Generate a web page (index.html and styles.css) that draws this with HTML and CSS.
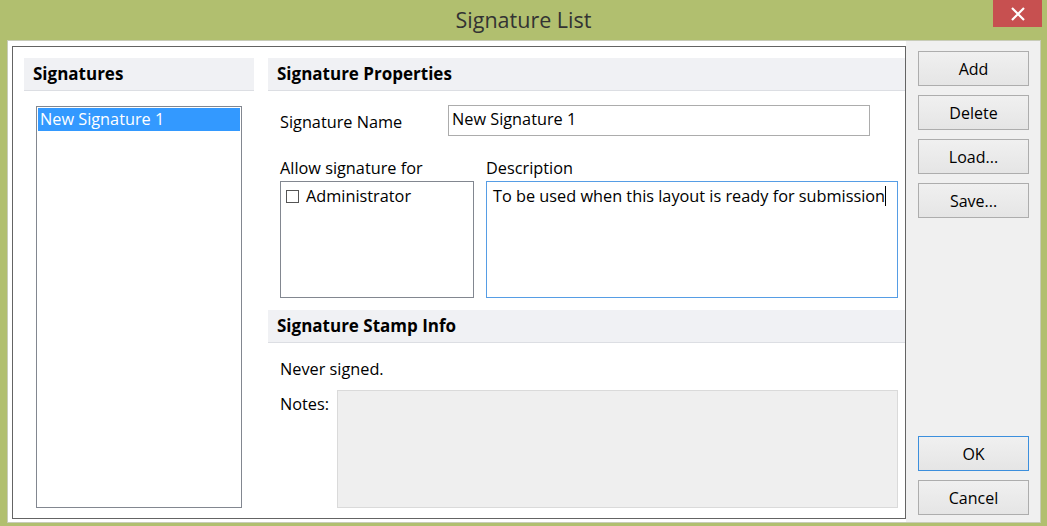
FILE: index.html
```html
<!DOCTYPE html>
<html lang="en">
<head>
  <meta charset="UTF-8">
  <meta name="viewport" content="width=device-width, initial-scale=1.0">
  <title>Signature List</title>
  <link rel="stylesheet" href="styles.css">
</head>
<body>
  <!-- Barre de titre -->
  <div class="titlebar">
    <span></span>
    <span class="title">Signature List</span>
    <a href="#" class="close">
      <svg width="14" height="14" viewBox="0 0 14 14"><path d="M1 1 L13 13 M13 1 L1 13" stroke="#fff" stroke-width="2.2"/></svg>
    </a>
  </div>

  <div class="dialog">
    <div class="main">
      <div class="panel">
        <!-- Colonne des signatures -->
        <div class="col-left">
          <div class="header">Signatures</div>
          <ul class="sig-list">
            <li class="selected">New Signature 1</li>
          </ul>
        </div>

        <!-- Colonne des propriétés -->
        <div class="col-right">
          <div class="header">Signature Properties</div>
          <div class="name-row">
            <span class="label">Signature Name</span>
            <div class="input">New Signature 1</div>
          </div>
          <div class="boxes">
            <div class="box-col allow">
              <span class="label">Allow signature for</span>
              <div class="box">
                <div class="check"><span class="checkbox"></span>Administrator</div>
              </div>
            </div>
            <div class="box-col desc">
              <span class="label">Description</span>
              <div class="box focused">To be used when this layout is ready for submission<span class="caret"></span></div>
            </div>
          </div>
          <div class="header stamp">Signature Stamp Info</div>
          <div class="never">Never signed.</div>
          <div class="notes-row">
            <span class="label">Notes:</span>
            <div class="notes"></div>
          </div>
        </div>
      </div>
    </div>

    <!-- Boutons -->
    <div class="buttons">
      <div class="btn-group">
        <button>Add</button>
        <button>Delete</button>
        <button>Load...</button>
        <button>Save...</button>
      </div>
      <div class="btn-group">
        <button class="default">OK</button>
        <button>Cancel</button>
      </div>
    </div>
  </div>
</body>
</html>
```

FILE: styles.css
```css
/* Fenêtre style Windows 8, bordure verte */
body {
  font-family: "Open Sans", "Noto Sans", sans-serif;
  font-size: 16.3px;
  color: #000;
  background-color: #b1bf6f;
  margin: 0;
  padding: 0;
  width: 1047px;
  height: 526px;
  overflow: hidden;
}
.titlebar {
  height: 40px;
  display: grid;
  grid-template-columns: 1fr auto 1fr;
  align-items: start;
}
.title {
  font-size: 21.5px;
  color: #333;
  line-height: 40px;
}
.close {
  justify-self: end;
  margin-right: 5px;
  width: 49px;
  height: 27px;
  background-color: #c75050;
  display: flex;
  align-items: center;
  justify-content: center;
}
.dialog {
  display: flex;
  margin: 0 6px 0 7px;
  height: 481px;
  border: 1px solid #c8ccb8;
  background-color: #f0f0f0;
}
.main {
  background-color: #fff;
  padding: 5px 0 4px 4px;
}
.panel {
  border: 1px solid #646464;
  display: grid;
  grid-template-columns: 230px 637px;
  column-gap: 14px;
  align-content: start;
  padding: 11px 0 0 11px;
  box-sizing: border-box;
  width: 894px;
  height: 473px;
}
.header {
  height: 32px;
  background-color: #f0f1f4;
  border-bottom: 1px solid #dcdee3;
  font-weight: bold;
  font-size: 17px;
  line-height: 32px;
  padding-left: 9px;
}
.sig-list {
  list-style-type: none;
  margin: 15px 0 0 12px;
  padding: 1px;
  width: 202px;
  height: 398px;
  border: 1px solid #828790;
}
.sig-list li {
  background-color: #3399ff;
  color: #fff;
  height: 23px;
  line-height: 23px;
  padding-left: 2px;
}
.label {
  display: block;
}
.name-row {
  display: flex;
  align-items: center;
  margin: 14px 0 0 12px;
}
.name-row .label {
  width: 168px;
  padding-top: 2px;
}
.input {
  border: 1px solid #acacac;
  line-height: 27px;
  padding-left: 3px;
  box-sizing: border-box;
  width: 422px;
  height: 31px;
}
.boxes {
  display: flex;
  gap: 12px;
  margin: 21px 0 0 12px;
}
.box-col .label {
  height: 22px;
  line-height: 22px;
  margin-bottom: 2px;
}
.box {
  border: 1px solid #828790;
  height: 117px;
  box-sizing: border-box;
}
.allow .box { width: 194px; }
.desc .box { width: 412px; }
.box.focused {
  border-color: #569de5;
  padding: 3px 6px;
}
.caret {
  display: inline-block;
  width: 1px;
  height: 20px;
  background-color: #000;
  vertical-align: -4px;
}
.check {
  display: flex;
  align-items: center;
  padding: 3px 5px;
}
.checkbox {
  width: 11px;
  height: 11px;
  border: 1px solid #555;
  margin-right: 7px;
}
.stamp {
  margin-top: 12px;
}
.never {
  margin: 15px 0 0 12px;
}
.notes-row {
  display: flex;
  margin: 10px 0 0 12px;
}
.notes-row .label {
  width: 57px;
  padding-top: 3px;
}
.notes {
  width: 561px;
  height: 118px;
  background-color: #efefef;
  border: 1px solid #dadada;
  box-sizing: border-box;
}
.buttons {
  flex: 1;
  display: flex;
  flex-direction: column;
  justify-content: space-between;
  padding: 10px 0 7px 12px;
}
.btn-group {
  display: flex;
  flex-direction: column;
  gap: 9px;
}
button {
  font-family: inherit;
  font-size: 16px;
  color: #000;
  width: 111px;
  height: 35px;
  border: 1px solid #adadad;
  background: linear-gradient(#f0f0f0, #e5e5e5);
  padding: 0;
}
button.default {
  border-color: #3c8fdd;
}
```
